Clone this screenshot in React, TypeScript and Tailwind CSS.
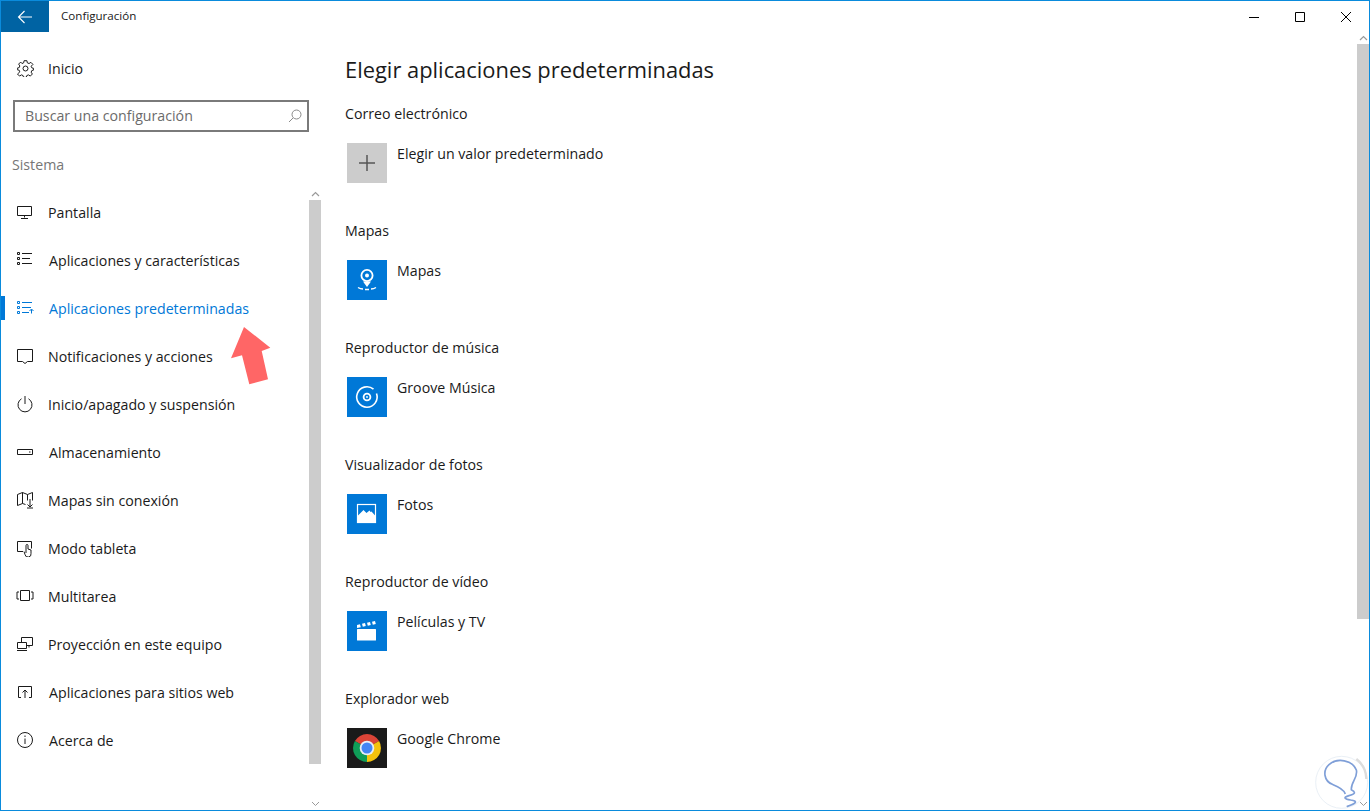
import React from "react";

const S = ({ children, color = "#1a1a1a" }: { children: React.ReactNode; color?: string }) => (
  <svg width="18" height="18" viewBox="0 0 18 18" fill="none" stroke={color} strokeWidth="1" className="shrink-0">
    {children}
  </svg>
);

const icons: Record<string, (c?: string) => React.ReactNode> = {
  pantalla: (c) => (
    <S color={c}><path d="M1.5 3.5h14v9h-14zM8.5 12.5v2M5 15.5h7" /></S>
  ),
  apps: (c) => (
    <S color={c}><path d="M1.5 1.5h2v2h-2zM1.5 6.5h2v2h-2zM1.5 11.5h2v2h-2z" /><path d="M6 2.5h10M6 7.5h8M6 12.5h10" /></S>
  ),
  pred: (c) => (
    <S color={c}><path d="M1.5 2.5h2v2h-2zM1.5 7.5h2v2h-2zM1.5 12.5h2v2h-2z" /><path d="M6 3.5h10M6 8.5h9M6 13.5h7M13.5 12l2-2 2 2M15.5 10.5v4" /></S>
  ),
  notif: (c) => (
    <S color={c}><path d="M1.5 2.5h15v12h-5l-2.5 2-2.5-2h-5z" /></S>
  ),
  power: (c) => (
    <S color={c}><path d="M5.5 3.8a7 7 0 1 0 7 0M9 1v8" /></S>
  ),
  storage: (c) => (
    <S color={c}><path d="M1.5 6.5h15v5h-15z" /><path d="M13 9h1.5" /></S>
  ),
  mapas: (c) => (
    <S color={c}><path d="M1.5 3.5l5-2 5 2 5-2v8M1.5 3.5v11l5-2 3 1M6.5 1.5v11M11.5 3.5v6M14 8v8M11.5 13.5l2.5 2.5 2.5-2.5M11 17h6" /></S>
  ),
  tablet: (c) => (
    <S color={c}><path d="M7 12.5H1.5v-10h14v7" /><path d="M10 14V6.5a1 1 0 0 1 2 0V10l3 1v3.5a3 3 0 0 1-6 1l-1-3" /></S>
  ),
  multi: (c) => (
    <S color={c}><path d="M4.5 3.5h9v10h-9zM3 5H1v7h2M15 5h2v7h-2" /></S>
  ),
  proy: (c) => (
    <S color={c}><path d="M5.5 7V2.5h11v8h-6M1.5 7.5h9v6h-9zM1 15.5h10M13 10.5v2" /></S>
  ),
  web: (c) => (
    <S color={c}><path d="M5 14.5H2.5v-11h13v11H13M9 15V7M6.5 9.5L9 7l2.5 2.5" /></S>
  ),
  info: (c) => (
    <S color={c}><circle cx="9" cy="9" r="7.5" /><path d="M9 7.5V13M9 4.5v1.5" /></S>
  ),
};

const rows: [string, string, number?][] = [
  ["pantalla", "Pantalla"],
  ["apps", "Aplicaciones y características", 1],
  ["pred", "Aplicaciones predeterminadas", 1],
  ["notif", "Notificaciones y acciones"],
  ["power", "Inicio/apagado y suspensión"],
  ["storage", "Almacenamiento", 1],
  ["mapas", "Mapas sin conexión"],
  ["tablet", "Modo tableta"],
  ["multi", "Multitarea"],
  ["proy", "Proyección en este equipo"],
  ["web", "Aplicaciones para sitios web", 1],
  ["info", "Acerca de", 1],
];

const ChevUp = () => (
  <svg width="9" height="6" viewBox="0 0 9 6" fill="none" stroke="#9a9a9a" strokeWidth="1.2"><path d="M1 5l3.5-3.5L8 5" /></svg>
);
const ChevDown = () => (
  <svg width="9" height="6" viewBox="0 0 9 6" fill="none" stroke="#9a9a9a" strokeWidth="1"><path d="M1 1l3.5 3.5L8 1" /></svg>
);

const Tile = ({ children, bg = "bg-[#0078d7]" }: { children: React.ReactNode; bg?: string }) => (
  <div className={`w-10 h-10 shrink-0 ${bg}`}>
    <svg width="40" height="40" viewBox="0 0 40 40" fill="none">{children}</svg>
  </div>
);

const sections: { label: string; app: string; tile: React.ReactNode }[] = [
  {
    label: "Correo electrónico",
    app: "Elegir un valor predeterminado",
    tile: (
      <Tile bg="bg-[#cccccc]">
        <path d="M20 12v16M12 20h16" stroke="#555555" strokeWidth="1.5" />
      </Tile>
    ),
  },
  {
    label: "Mapas",
    app: "Mapas",
    tile: (
      <Tile>
        <circle cx="20" cy="15.5" r="5.6" stroke="#fff" strokeWidth="1.8" />
        <circle cx="20" cy="15.5" r="2" fill="#fff" />
        <path d="M16 21.5l4 5.5 4-5.5z" fill="#fff" />
        <path d="M11 27.5c1.5 1 3.5 1.5 5 1.5M24 29c1.5 0 3.5-.5 5-1.5M18 29.5h4" stroke="#fff" strokeWidth="1.3" />
      </Tile>
    ),
  },
  {
    label: "Reproductor de música",
    app: "Groove Música",
    tile: (
      <Tile>
        <path d="M26.5 12.2A10.2 10.2 0 1 0 29.5 16.5" stroke="#fff" strokeWidth="1.6" />
        <circle cx="20" cy="20" r="3.4" stroke="#fff" strokeWidth="1.8" />
        <circle cx="20" cy="20" r="0.9" fill="#fff" />
      </Tile>
    ),
  },
  {
    label: "Visualizador de fotos",
    app: "Fotos",
    tile: (
      <Tile>
        <rect x="10.5" y="10.5" width="18" height="18" stroke="#fff" strokeWidth="1.2" />
        <path d="M11 28.5V21.5l5.5-5.5 3 3 3-2.5 1 1.5 1-.5 4 4.5v6z" fill="#fff" />
      </Tile>
    ),
  },
  {
    label: "Reproductor de vídeo",
    app: "Películas y TV",
    tile: (
      <Tile>
        <path d="M10 14l3-.8.8 3-3.8.8zM15 12.8l3-.8.8 3-3 .8zM20 11.8l3-.8.8 3-3 .8zM25 10.8l3-.8.8 3-3 .8z" fill="#fff" />
        <rect x="10" y="18" width="19" height="11.5" rx="0.5" fill="#fff" />
      </Tile>
    ),
  },
  {
    label: "Explorador web",
    app: "Google Chrome",
    tile: (
      <Tile bg="bg-[#1a1a1a]">
        <path d="M20 20L7.9 13A14 14 0 0 1 32.1 13z" fill="#db4437" />
        <path d="M20 20L32.1 13A14 14 0 0 1 20 34z" fill="#f4c20d" />
        <path d="M20 20L20 34A14 14 0 0 1 7.9 13z" fill="#0f9d58" />
        <circle cx="20" cy="20" r="7.3" fill="#e8eef5" />
        <circle cx="20" cy="20" r="5.5" fill="#4285f4" />
      </Tile>
    ),
  },
];

export default function App() {
  return (
    <div
      className="relative w-[1370px] h-[811px] flex flex-col bg-white border border-[#0a8bdc] overflow-hidden text-[#1a1a1a] text-[14.2px]"
      style={{ fontFamily: '"Open Sans", "Noto Sans", sans-serif' }}
    >
      <header className="h-[31px] shrink-0 flex items-center">
        <div className="w-12 h-full bg-[#0063a3] flex items-center justify-center">
          <svg width="16" height="14" viewBox="0 0 16 14" fill="none" stroke="#fff" strokeWidth="1.1">
            <path d="M15 7H1.5M7.5 1L1.5 7l6 6" />
          </svg>
        </div>
        <span className="ml-3 pb-[2px] text-[11.6px]">Configuración</span>
        <div className="ml-auto flex items-center pr-[18px] gap-9">
          <svg width="10" height="10" viewBox="0 0 10 10" stroke="#000" fill="none"><path d="M0 5.5h10" /></svg>
          <svg width="10" height="10" viewBox="0 0 10 10" stroke="#000" fill="none"><path d="M.5.5h9v9h-9z" /></svg>
          <svg width="10" height="10" viewBox="0 0 10 10" stroke="#000" fill="none"><path d="M0 0l10 10M10 0L0 10" /></svg>
        </div>
      </header>

      <div className="flex-1 flex min-h-0">
        <aside className="w-[320px] shrink-0 flex flex-col">
          <div className="h-12 mt-3 shrink-0 flex items-center pl-[16px] gap-[14px]">
            <svg width="17" height="17" viewBox="0 0 24 24" fill="none" stroke="#1a1a1a" strokeWidth="1.4" className="shrink-0">
              <circle cx="12" cy="12" r="3.5" />
              <path d="M10 1h4l.6 3 2.4 1 2.6-1.7 2.9 2.9L20 8.8l1 2.4 2.5.6v2.400l-2.5.6-1 2.4 1.7 2.6-2.9 2.9-2.6-1.7-2.4 1-.6 2.5h-4l-.6-2.5-2.4-1-2.6 1.7-2.9-2.9L4 16.8l-1-2.4-2.5-.6v-2.4l2.5-.6 1-2.4-1.7-2.6 2.9-2.9L7 5l2.4-1z" />
            </svg>
            <span className="pt-[2px]">Inicio</span>
          </div>
          <div className="mt-2 ml-3 w-[296px] h-8 shrink-0 border-2 border-[#7a7a7a] flex items-center pl-[10px] pr-[5px] justify-between">
            <span className="text-[#6b6b6b]">Buscar una configuración</span>
            <svg width="14" height="14" viewBox="0 0 14 14" fill="none" stroke="#8a8a8a" strokeWidth="1">
              <circle cx="8.5" cy="5.5" r="4.5" />
              <path d="M5 9l-4 4" />
            </svg>
          </div>
          <div className="h-14 shrink-0 pl-[11px] pt-[22px] text-[#767676] leading-[22px]">Sistema</div>
          <div className="flex-1 flex min-h-0">
            <nav className="flex-1">
              {rows.map(([ic, label, shift]) => {
                const active = ic === "pred";
                const color = active ? "#0078d7" : "#1a1a1a";
                return (
                  <div key={ic} className="relative h-12 flex items-center pl-[15px]">
                    {active && <div className="absolute left-0 top-3 w-1 h-6 bg-[#0078d7]" />}
                    {icons[ic](color)}
                    <span className={`pt-[2px] ${shift ? "ml-[15px]" : "ml-[14px]"} ${active ? "text-[#0078d7]" : ""}`}>{label}</span>
                  </div>
                );
              })}
            </nav>
            <div className="w-3 shrink-0 flex flex-col items-center">
              <div className="h-3 flex items-center"><ChevUp /></div>
              <div className="h-[564px] w-full bg-[#cccccc]" />
              <div className="flex-1 flex items-end pb-[3px]"><ChevDown /></div>
            </div>
          </div>
        </aside>

        <main className="flex-1 pl-[24px] min-w-0">
          <h1 className="text-[21.9px] font-normal leading-[30px] pt-[23px] pb-[17px] box-content">Elegir aplicaciones predeterminadas</h1>
          {sections.map((s) => (
            <section key={s.label} className="h-[117px]">
              <div className="h-6 leading-6">{s.label}</div>
              <div className="mt-[17px] pl-[2px] flex">
                {s.tile}
                <span className="ml-[10px] leading-[22px]">{s.app}</span>
              </div>
            </section>
          ))}
        </main>

        <div className="w-3 shrink-0 flex flex-col items-center">
          <div className="h-3 flex items-center"><ChevUp /></div>
          <div className="h-[575px] w-full bg-[#cccccc]" />
          <div className="flex-1 flex items-end pb-[3px]"><ChevDown /></div>
        </div>
      </div>

      <svg className="absolute left-[229px] top-[325px]" width="42" height="60" viewBox="229 325 42 60">
        <polygon points="243,326 269.3,346.7 260.7,350 267,378.3 248.3,383.3 241,354.3 230,357.3" fill="#ff6666" />
      </svg>

      <svg className="absolute right-0 bottom-0" width="100" height="111" viewBox="0 0 300 333" fill="none">
        <circle cx="218" cy="250" r="78" stroke="#eaf0f6" strokeWidth="3" />
        <path d="M262 180a78 78 0 0 1 30 60" stroke="#dcdcdc" strokeWidth="7" />
        <path d="M228 283C222 268 205 262 190 256C165 246 160 215 180 197C205 175 250 183 262 213C268 235 245 250 247 272C262 280 258 285 240 290C220 296 228 300 245 303C268 306 262 314 235 322" stroke="#7f9fd8" strokeWidth="5" strokeLinecap="round" />
      </svg>
    </div>
  );
}
